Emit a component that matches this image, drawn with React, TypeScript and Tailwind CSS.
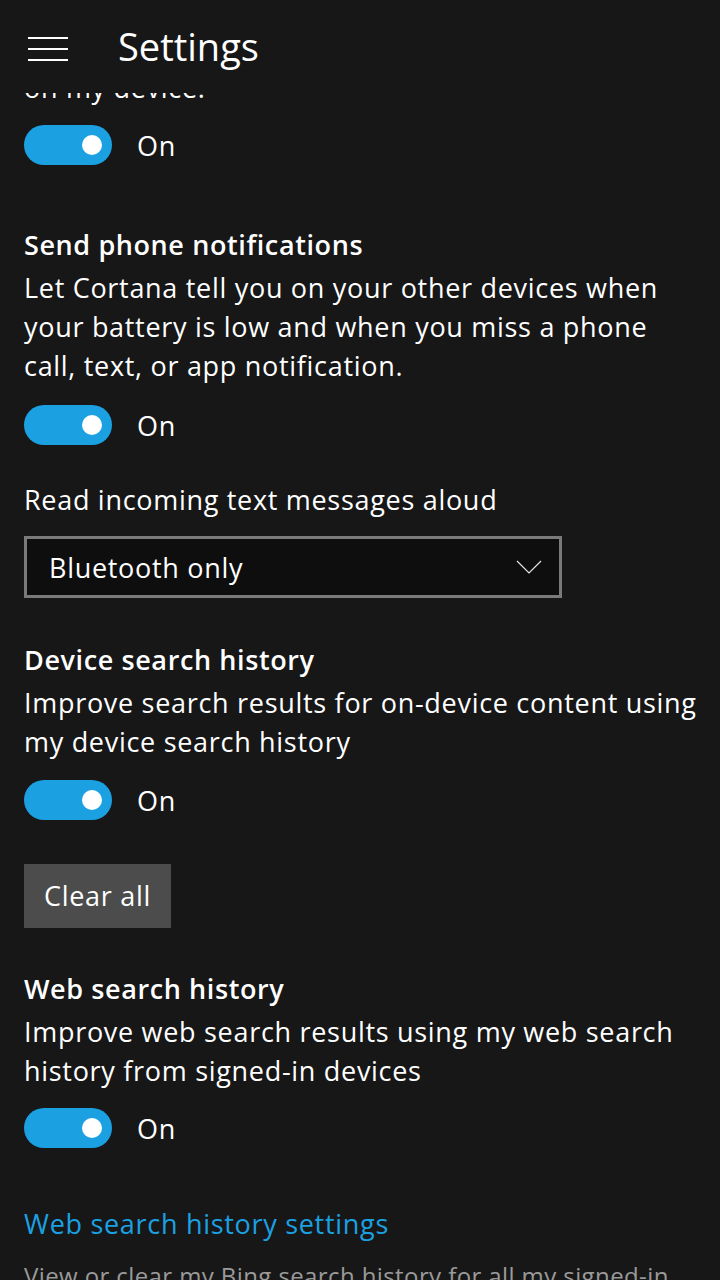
import React from 'react';

// toggle switch shown in the "On" state
function Toggle() {
    return (
        <div className="flex items-center">
            <div className="w-[88px] h-[40px] rounded-full bg-[#1ba1e2] flex items-center justify-end pr-[10px]">
                <div className="w-[20px] h-[20px] rounded-full bg-white" />
            </div>
            <span className="ml-[25px] text-[27px] leading-[39px] tracking-[0.7px] text-white">On</span>
        </div>
    );
}

function SectionTitle({ children }: { children: React.ReactNode }) {
    return <h2 className="text-[27px] leading-[39px] tracking-[0.6px] font-semibold text-white">{children}</h2>;
}

function Body({ children }: { children: React.ReactNode }) {
    return <p className="text-[27px] leading-[39px] tracking-[0.7px] text-white">{children}</p>;
}

export default function App() {
    return (
        <div
            className="w-[720px] h-[1280px] overflow-hidden bg-[#171717] text-white"
            style={{ fontFamily: '"Open Sans", "Noto Sans", sans-serif' }}
        >
            {/* header */}
            <header className="h-[93px] flex items-start pt-[20px]">
                <button className="ml-[28px] mt-[17px] w-[40px] flex flex-col gap-[9px]">
                    <span className="block h-[2px] bg-white" />
                    <span className="block h-[2px] bg-white" />
                    <span className="block h-[2px] bg-white" />
                </button>
                <h1 className="ml-[50px] text-[38px] leading-[52px] font-normal">Settings</h1>
            </header>

            <main className="pl-[24px] pr-[16px]">
                {/* previous setting, scrolled under the header */}
                <div className="h-[14px] overflow-hidden">
                    <p className="-mt-[25px] text-[27px] leading-[39px] tracking-[0.7px]">on my device.</p>
                </div>
                <div className="mt-[18px]">
                    <Toggle />
                </div>

                <div className="mt-[60px]">
                    <SectionTitle>Send phone notifications</SectionTitle>
                    <div className="mt-[4px]">
                        <Body>
                            Let Cortana tell you on your other devices when your battery is low and when you miss a phone call, text, or app notification.
                        </Body>
                    </div>
                    <div className="mt-[20px]">
                        <Toggle />
                    </div>
                </div>

                <div className="mt-[35px]">
                    <Body>Read incoming text messages aloud</Body>
                    <div className="mt-[17px] w-[538px] h-[62px] border-[3px] border-[#7a7a7a] bg-[#0e0e0e] flex items-center justify-between pl-[22px] pr-[17px]">
                        <span className="text-[27px] leading-[39px] tracking-[0.7px]">Bluetooth only</span>
                        <svg width="26" height="14" viewBox="0 0 26 14" fill="none">
                            <path d="M1 1 L13 13 L25 1" stroke="#e6e6e6" strokeWidth="1.2" />
                        </svg>
                    </div>
                </div>

                <div className="mt-[42px]">
                    <SectionTitle>Device search history</SectionTitle>
                    <div className="mt-[4px]">
                        <Body>Improve search results for on-device content using my device search history</Body>
                    </div>
                    <div className="mt-[19px]">
                        <Toggle />
                    </div>
                    <button className="mt-[44px] h-[64px] px-[20px] bg-[#4c4c4c] text-[27px] tracking-[0.7px] text-white">
                        Clear all
                    </button>
                </div>

                <div className="mt-[41px]">
                    <SectionTitle>Web search history</SectionTitle>
                    <div className="mt-[4px]">
                        <Body>Improve web search results using my web search history from signed-in devices</Body>
                    </div>
                    <div className="mt-[18px]">
                        <Toggle />
                    </div>
                </div>

                <div className="mt-[56px]">
                    <a className="block text-[27px] leading-[39px] tracking-[0.7px] text-[#1ba1e2]">Web search history settings</a>
                    <p className="mt-[16px] text-[24px] leading-[34px] tracking-[0.4px] text-[#9a9a9a]">
                        View or clear my Bing search history for all my signed-in devices
                    </p>
                </div>
            </main>
        </div>
    );
}
